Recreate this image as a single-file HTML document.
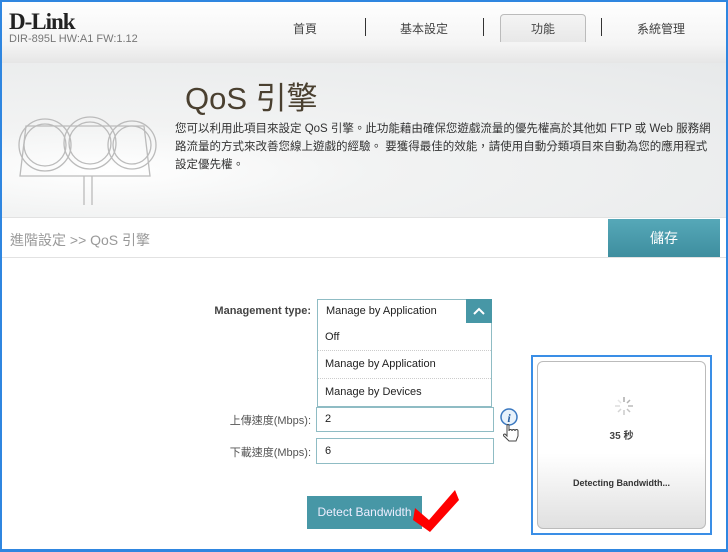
<!DOCTYPE html>
<html><head><meta charset="utf-8"><style>
*{margin:0;padding:0;box-sizing:border-box}
body{width:728px;height:552px;position:relative;overflow:hidden;background:#fff;font-family:"Liberation Sans","Noto Sans CJK TC",sans-serif;color:#333}
.frame{position:absolute;inset:0;border:2px solid #2f86e0;border-bottom-width:3px;pointer-events:none;z-index:10}
.hdr{position:absolute;left:0;top:0;width:728px;height:63px;background:linear-gradient(#fff,#f4f4f4 70%,#e6e6e6)}
.logo{position:absolute;left:9px;top:9px;font-family:"Liberation Serif",serif;font-weight:bold;font-size:23px;color:#222;letter-spacing:-1px}
.fw{position:absolute;left:9px;top:33px;font-size:11px;color:#777}
.tab{position:absolute;top:20px;font-size:12px;color:#444;width:80px;text-align:center}
.sep{position:absolute;top:18px;width:1px;height:18px;background:#333}
.tabon{position:absolute;left:500px;top:14px;width:86px;height:28px;border:1px solid #bbb;border-bottom:none;border-radius:4px 4px 0 0;background:linear-gradient(#f4f4f4,#e8e8e8)}
.band{position:absolute;left:0;top:63px;width:728px;height:154px;background:radial-gradient(ellipse at 15% 70%,#fff 0,#f2f3f3 30%,#e7e9ea 100%)}
.title{position:absolute;left:185px;top:73px;font-size:31px;color:#4a4030}
.desc{position:absolute;left:175px;top:120px;width:541px;font-size:11.5px;line-height:18px;color:#333}
.bc{position:absolute;left:0;top:217px;width:728px;height:41px;border-top:1px solid #e2e2e2;border-bottom:1px solid #e2e2e2;background:#fff}
.bct{position:absolute;left:10px;top:12px;font-size:14px;color:#999}
.save{position:absolute;left:608px;top:219px;width:112px;height:38px;background:linear-gradient(#56a8b8,#3e8e9f);color:#fff;font-size:14px;text-align:center;line-height:38px}
.lbl{position:absolute;font-size:11px;color:#444;text-align:right;width:200px}
.box{position:absolute;border:1px solid #8fbcc4;background:#fff;font-size:11px;color:#222;padding-left:8px}
.item{position:absolute;left:325px;font-size:11px;color:#222}
.btn{position:absolute;left:307px;top:496px;width:115px;height:33px;background:#4797a6;color:#eef;font-size:12px;text-align:center;line-height:33px}
.panel{position:absolute;left:531px;top:355px;width:181px;height:180px;border:2px solid #3a8ee6}
.card{position:absolute;left:4px;top:4px;right:4px;bottom:4px;border:1px solid #bbb;border-radius:6px;background:linear-gradient(#fff 55%,#e0e0e0)}
</style></head><body>
<div class="hdr">
<div class="logo">D-Link</div><div class="fw">DIR-895L HW:A1 FW:1.12</div>
<div class="tabon"></div>
<div class="tab" style="left:265px">首頁</div>
<div class="sep" style="left:365px"></div>
<div class="tab" style="left:384px">基本設定</div>
<div class="sep" style="left:483px"></div>
<div class="tab" style="left:503px">功能</div>
<div class="sep" style="left:601px"></div>
<div class="tab" style="left:621px">系統管理</div>
</div>
<div class="band"></div>
<svg style="position:absolute;left:0;top:0" width="170" height="216" fill="none" stroke="#bbb" stroke-width="1.3">
<path d="M26 126 L144 126 L150 176 L20 176 Z"/>
<circle cx="45" cy="145" r="26"/><circle cx="45" cy="145" r="21"/>
<circle cx="90" cy="143" r="26"/><circle cx="90" cy="143" r="21"/>
<circle cx="132" cy="145" r="24"/><circle cx="132" cy="145" r="19"/>
<path d="M84 176 V205 M92 176 V205"/></svg>
<div class="title">QoS 引擎</div>
<div class="desc">您可以利用此項目來設定 QoS 引擎。此功能藉由確保您遊戲流量的優先權高於其他如 FTP 或 Web 服務網路流量的方式來改善您線上遊戲的經驗。 要獲得最佳的效能，請使用自動分類項目來自動為您的應用程式設定優先權。</div>
<div class="bc"><div class="bct">進階設定 &gt;&gt; QoS 引擎</div></div>
<div class="save">儲存</div>

<div class="lbl" style="left:111px;top:305px;font-weight:bold">Management type:</div>
<div class="box" style="left:317px;top:299px;width:175px;height:25px;line-height:23px">Manage by Application</div>
<div style="position:absolute;left:466px;top:299px;width:26px;height:25px;background:#4797a6"><svg width="26" height="25"><path d="M8 15 L13 10 L18 15" stroke="#fff" stroke-width="2" fill="none"/></svg></div>
<div class="box" style="left:317px;top:323px;width:175px;height:84px;border-top:none"></div>
<div style="position:absolute;left:318px;top:350px;width:173px;border-top:1px dotted #ccc"></div>
<div style="position:absolute;left:318px;top:378px;width:173px;border-top:1px dotted #ccc"></div>
<div class="item" style="top:331px">Off</div>
<div class="item" style="top:358px">Manage by Application</div>
<div class="item" style="top:386px">Manage by Devices</div>

<div class="lbl" style="left:111px;top:412px;color:#555">上傳速度(Mbps):</div>
<div class="box" style="left:316px;top:407px;width:178px;height:25px;line-height:23px">2</div>
<div class="lbl" style="left:111px;top:444px;color:#555">下載速度(Mbps):</div>
<div class="box" style="left:316px;top:438px;width:178px;height:26px;line-height:24px">6</div>
<svg style="position:absolute;left:498px;top:407px" width="24" height="36" viewBox="0 0 24 36">
<circle cx="11" cy="10" r="8" fill="#e8f2fb" stroke="#3a78c0" stroke-width="1.5"/>
<text x="11" y="15" font-size="12" font-style="italic" font-weight="bold" fill="#2a5fa0" text-anchor="middle" font-family="Liberation Serif">i</text>
<path d="M9 19 v10 l-2-2 c-2 0-2 2 0 3 l4 4 h7 l2-5 v-5 c0-2-3-2-3 0 c0-2-3-2-3 0 c0-2-3-2-3 0 v-5 c0-2-2-2-2 0z" fill="#fff" stroke="#444" stroke-width="1"/></svg>

<div class="btn">Detect Bandwidth</div>
<svg style="position:absolute;left:413px;top:486px" width="48" height="46"><path d="M2 22 L16 34 L42 4 L46 14 L17 46 L0 34 Z" fill="#f00"/></svg>

<div class="panel"><div class="card">
<svg style="position:absolute;left:75px;top:33px" width="22" height="22" viewBox="-11 -11 22 22" stroke="#aaa" stroke-width="1.5">
<line x1="0" y1="-4" x2="0" y2="-9"/><line x1="3" y1="-3" x2="6" y2="-6" opacity=".9"/><line x1="4" y1="0" x2="9" y2="0" opacity=".8"/><line x1="3" y1="3" x2="6" y2="6" opacity=".7"/><line x1="0" y1="4" x2="0" y2="9" opacity=".6"/><line x1="-3" y1="3" x2="-6" y2="6" opacity=".5"/><line x1="-4" y1="0" x2="-9" y2="0" opacity=".4"/><line x1="-3" y1="-3" x2="-6" y2="-6" opacity=".3"/></svg>
<div style="position:absolute;left:0;right:0;top:65px;text-align:center;font-size:10px;font-weight:bold;color:#444">35 秒</div>
<div style="position:absolute;left:0;right:0;top:116px;text-align:center;font-size:9px;font-weight:bold;color:#333">Detecting Bandwidth...</div>
</div></div>
<div class="frame"></div>
</body></html>
